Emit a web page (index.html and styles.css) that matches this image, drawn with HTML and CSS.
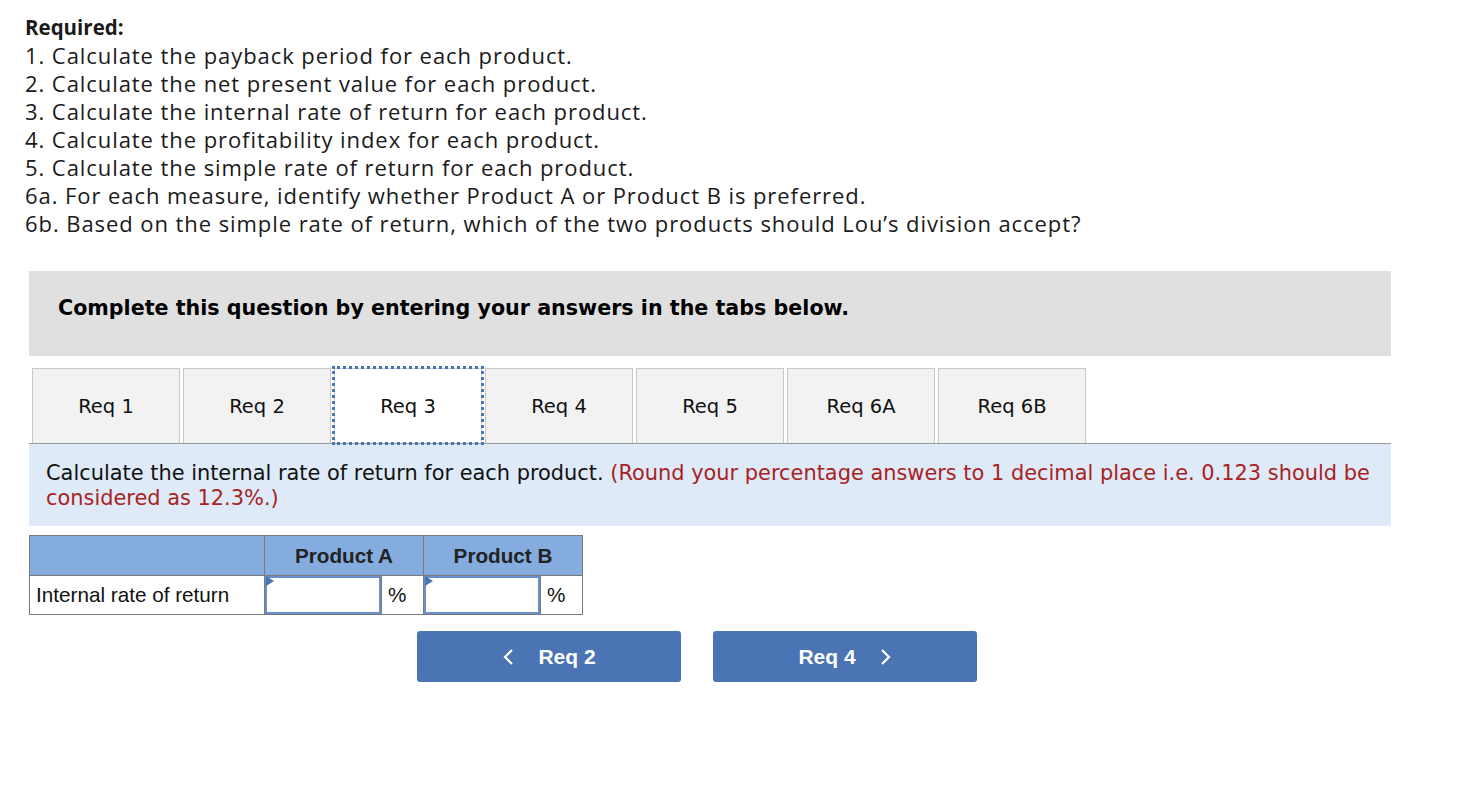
FILE: index.html
```html
<!DOCTYPE html>
<html>
<head>
<meta charset="utf-8">
<link rel="stylesheet" href="styles.css">
</head>
<body>
<div class="page">
  <div class="required">
    <div class="req-title">Required:</div>
    <div>1. Calculate the payback period for each product.</div>
    <div>2. Calculate the net present value for each product.</div>
    <div>3. Calculate the internal rate of return for each product.</div>
    <div>4. Calculate the profitability index for each product.</div>
    <div>5. Calculate the simple rate of return for each product.</div>
    <div>6a. For each measure, identify whether Product A or Product B is preferred.</div>
    <div>6b. Based on the simple rate of return, which of the two products should Lou’s division accept?</div>
  </div>

  <div class="panel">
    <div class="banner">Complete this question by entering your answers in the tabs below.</div>

    <div class="tabs">
      <div class="tab">Req 1</div>
      <div class="tab">Req 2</div>
      <div class="tab active">Req 3</div>
      <div class="tab">Req 4</div>
      <div class="tab">Req 5</div>
      <div class="tab">Req 6A</div>
      <div class="tab">Req 6B</div>
    </div>

    <div class="instructions">Calculate the internal rate of return for each product. <span class="red">(Round your percentage answers to 1 decimal place i.e. 0.123 should be considered as 12.3%.)</span></div>

    <table class="grid">
      <tr class="head">
        <th class="label-col"></th>
        <th colspan="2">Product A</th>
        <th colspan="2">Product B</th>
      </tr>
      <tr>
        <td class="label">Internal rate of return</td>
        <td class="inp"><div class="box"><span class="flag"></span></div></td>
        <td class="pct">%</td>
        <td class="inp"><div class="box"><span class="flag"></span></div></td>
        <td class="pct">%</td>
      </tr>
    </table>

    <div class="nav">
      <div class="btn">
        <svg class="chev" width="12" height="18" viewBox="0 0 12 18"><path d="M10 2 L3 9 L10 16" fill="none" stroke="#ffffff" stroke-width="2.2"/></svg>
        <span>Req 2</span>
      </div>
      <div class="btn">
        <span>Req 4</span>
        <svg class="chev" width="12" height="18" viewBox="0 0 12 18"><path d="M2 2 L9 9 L2 16" fill="none" stroke="#ffffff" stroke-width="2.2"/></svg>
      </div>
    </div>
  </div>
</div>
</body>
</html>
```

FILE: styles.css
```css
html, body {
  margin: 0;
  padding: 0;
  background: #ffffff;
}

.page {
  padding: 13px 0 0 25px;
}

.required {
  font-family: "Open Sans", "Lato", sans-serif;
  font-size: 22px;
  letter-spacing: 0.93px;
  line-height: 28px;
  color: #1a1a1a;
}

.req-title {
  font-weight: 700;
  font-size: 20.5px;
  letter-spacing: 0;
}

.panel {
  margin-top: 34px;
  margin-left: 4px;
  width: 1362px;
}

.banner {
  height: 85px;
  background: #e0e0e0;
  box-sizing: border-box;
  padding-left: 29px;
  padding-bottom: 12px;
  display: flex;
  align-items: center;
  font-family: "DejaVu Sans", Verdana, sans-serif;
  font-weight: 700;
  font-size: 20.65px;
  color: #000;
}

.tabs {
  margin-top: 12px;
  padding-left: 3px;
  display: flex;
  gap: 3px;
  border-bottom: 1px solid #9a9a9a;
}

.tab {
  width: 148px;
  height: 75px;
  box-sizing: border-box;
  background: #f2f2f2;
  border: 1px solid #c8c8c8;
  border-bottom: none;
  display: flex;
  align-items: center;
  justify-content: center;
  font-family: "DejaVu Sans", Verdana, sans-serif;
  font-size: 19.5px;
  color: #111;
}

.tab.active {
  background: #ffffff;
  outline: 3px dotted #4a74b4;
  outline-offset: -1px;
}

.instructions {
  background: #deeaf7;
  padding: 17px 17px 15px 17px;
  font-family: "DejaVu Sans", Verdana, sans-serif;
  font-size: 20.9px;
  line-height: 25px;
  color: #111;
}

.red {
  color: #a8221f;
}

.grid {
  margin-top: 9px;
  border-collapse: collapse;
  font-family: "Liberation Sans", Arial, sans-serif;
  font-size: 20.7px;
  color: #111;
}

.grid td, .grid th {
  border: 1px solid #7a7a7a;
  padding: 0;
}

.head th {
  background: #84acdf;
  height: 39px;
  font-weight: 700;
  color: #222;
}

.label-col {
  width: 234px;
}

.label {
  height: 38px;
  padding-left: 6px !important;
}

.inp {
  width: 116px;
}

.box {
  height: 38px;
  box-sizing: border-box;
  border: 2px solid #6a8fcc;
  background: #fff;
  position: relative;
}

.flag {
  position: absolute;
  left: -1px;
  top: -2px;
  width: 0;
  height: 0;
  border-top: 5px solid transparent;
  border-bottom: 5px solid transparent;
  border-left: 8px solid #4a74b4;
}

.pct {
  width: 42px;
  padding-left: 6px !important;
  box-sizing: border-box;
}

.nav {
  margin-top: 16px;
  margin-left: 388px;
  display: flex;
  gap: 32px;
}

.btn {
  width: 264px;
  height: 51px;
  background: #4a74b4;
  border-radius: 3px;
  color: #fff;
  display: flex;
  align-items: center;
  justify-content: center;
  gap: 24px;
  font-family: "Liberation Sans", Arial, sans-serif;
  font-weight: 700;
  font-size: 21px;
}

.chev {
  display: block;
}
```
